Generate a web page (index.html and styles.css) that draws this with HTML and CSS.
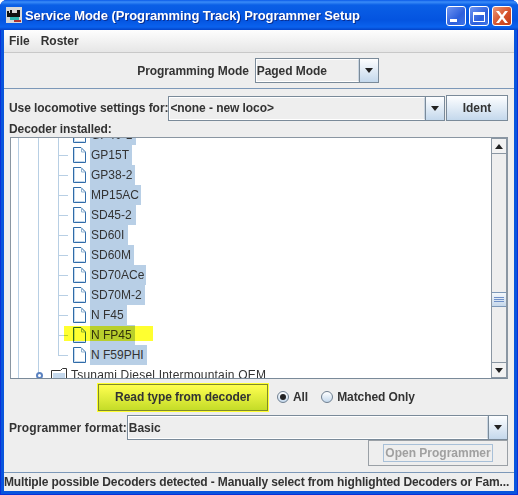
FILE: index.html
```html
<!DOCTYPE html>
<html lang="en">
<head>
    <meta charset="UTF-8">
    <meta name="viewport" content="width=device-width, initial-scale=1.0">
    <title>Programmer Setup</title>
    <link rel="stylesheet" href="styles.css">
</head>
<body>
    <div class="window">
        <div class="title-bar">
            <svg class="app-icon" width="16" height="16" viewBox="0 0 16 16">
                <rect width="16" height="16" fill="#d8d8d8"/>
                <path d="M1 4h2v2h1V3h2v3h5V3h3v7H1z" fill="#111"/>
                <rect x="4" y="10" width="9" height="3" fill="#2fb8b0"/>
                <rect x="8" y="13" width="7" height="2" fill="#a33"/>
            </svg>
            <span class="title-text">Service Mode (Programming Track) Programmer Setup</span>
            <div class="win-buttons">
                <div class="win-btn btn-blue">
                    <svg width="20" height="20" viewBox="0 0 20 20"><rect x="4" y="13" width="7" height="3" fill="#fff"/></svg>
                </div>
                <div class="win-btn btn-blue">
                    <svg width="20" height="20" viewBox="0 0 20 20"><path d="M4 6h12v10H4zM5 9v6h10V9z" fill="#fff" fill-rule="evenodd"/></svg>
                </div>
                <div class="win-btn btn-red">
                    <svg width="20" height="20" viewBox="0 0 20 20"><path d="M4 5h3l3 4 3-4h3l-4.500 6 4.500 6h-3l-3-4-3 4H4l4.500-6z" fill="#fff"/></svg>
                </div>
            </div>
        </div>

        <div class="content">
            <div class="menu-bar">
                <span>File</span>
                <span>Roster</span>
            </div>

            <div class="mode-row">
                <span class="label">Programming Mode</span>
                <div class="combo mode-combo">
                    <div class="combo-value">Paged Mode</div>
                    <div class="combo-arrow"><i class="arrow-down"></i></div>
                </div>
            </div>

            <div class="main">
                <div class="loco-row">
                    <span class="label">Use locomotive settings for:</span>
                    <div class="combo grow">
                        <div class="combo-value">&lt;none - new loco&gt;</div>
                        <div class="combo-arrow"><i class="arrow-down"></i></div>
                    </div>
                    <div class="ident-btn">Ident</div>
                </div>

                <div class="label decoder-label">Decoder installed:</div>

                <div class="tree-box">
                    <div class="tree-view">
                        <i class="guide guide-1"></i>
                        <i class="guide guide-2"></i>
                        <i class="guide guide-3"></i>
                        <div class="tree-rows" id="tree-rows"></div>
                    </div>
                    <div class="scrollbar">
                        <div class="scroll-btn"><i class="arrow-up"></i></div>
                        <div class="scroll-track">
                            <div class="scroll-thumb"><i></i><i></i><i></i></div>
                        </div>
                        <div class="scroll-btn"><i class="arrow-down"></i></div>
                    </div>
                </div>

                <div class="read-row">
                    <div class="read-btn">Read type from decoder</div>
                    <label class="radio"><i class="radio-dot checked"></i>All</label>
                    <label class="radio"><i class="radio-dot"></i>Matched Only</label>
                </div>

                <div class="format-row">
                    <span class="label format-label">Programmer format:</span>
                    <div class="combo grow">
                        <div class="combo-value">Basic</div>
                        <div class="combo-arrow"><i class="arrow-down"></i></div>
                    </div>
                </div>

                <div class="open-row">
                    <div class="open-btn"><span>Open Programmer</span></div>
                </div>
            </div>

            <div class="status-bar">Multiple possible Decoders detected - Manually select from highlighted Decoders or Fam...</div>
        </div>
    </div>

    <script>
        const decoders = [
            { name: "GP40-1", width: 46 },
            { name: "GP15T", width: 42 },
            { name: "GP38-2", width: 45 },
            { name: "MP15AC", width: 51 },
            { name: "SD45-2", width: 46 },
            { name: "SD60I", width: 38 },
            { name: "SD60M", width: 44 },
            { name: "SD70ACe", width: 56 },
            { name: "SD70M-2", width: 55 },
            { name: "N F45", width: 37 },
            { name: "N FP45", width: 45, marked: true },
            { name: "N F59PHI", width: 57 }
        ];

        const fileIcon = '<svg class="file-icon" width="13" height="16" viewBox="0 0 13 16">' +
            '<path d="M.5.5h7.500l4.500 4.500v10.500H.5z" fill="#fff" stroke="#2f6ba8"/>' +
            '<path d="M1.500 1.500v13h10" fill="none" stroke="#c4d8ec"/>' +
            '<path d="M8.500 1v4h4" fill="none" stroke="#8fb2d2"/></svg>';

        const rows = document.getElementById("tree-rows");
        decoders.forEach(d => {
            const row = document.createElement("div");
            row.classList.add("tree-row");
            if (d.marked) {
                row.classList.add("marked");
            }
            const name = document.createElement("span");
            name.classList.add("row-name");
            name.textContent = d.name;
            name.style.width = d.width + "px";
            row.innerHTML = '<i class="stub"></i>' + fileIcon;
            row.appendChild(name);
            rows.appendChild(row);
        });

        const family = document.createElement("div");
        family.classList.add("tree-row", "family-row");
        family.innerHTML = '<i class="handle"></i>' +
            '<svg class="folder-icon" width="16" height="14" viewBox="0 0 16 14">' +
            '<path d="M.5 13.500v-11h9l2-2h4v13z" fill="#fff" stroke="#333"/>' +
            '<rect x="2" y="5" width="12" height="8" fill="#c4d8ec"/></svg>' +
            '<span class="family-name">Tsunami Diesel Intermountain OEM</span>';
        rows.appendChild(family);
    </script>
</body>
</html>
```

FILE: styles.css
```css
* {
    box-sizing: border-box;
}
html, body {
    margin: 0;
    padding: 0;
}
body {
    width: 518px;
    height: 495px;
    overflow: hidden;
    font-family: "Liberation Sans", Arial, sans-serif;
    font-size: 12px;
    color: #333;
}
i {
    display: block;
}
.window {
    width: 518px;
    height: 495px;
    display: flex;
    flex-direction: column;
    background: #0855dd;
    border-radius: 7px 7px 0 0;
    padding: 0 4px 4px;
    box-shadow: inset 1px 0 #0831d9, inset -1px 0 #0831d9, inset 0 -1px #0831d9;
}
.title-bar {
    height: 30px;
    margin: 0 -4px;
    padding: 0 6px;
    display: flex;
    align-items: center;
    background: linear-gradient(to bottom, #0a5ae8 0, #3a8cf8 2px, #0a5fe6 5px, #0454e0 20px, #0a62ee 27px, #0343c8 30px);
    border-radius: 7px 7px 0 0;
}
.app-icon {
    flex: none;
}
.title-text {
    margin-left: 3px;
    font-weight: bold;
    font-size: 13px;
    letter-spacing: -0.08px;
    color: #fff;
    text-shadow: 1px 1px 0 #0a2f90;
    white-space: nowrap;
}
.win-buttons {
    margin-left: auto;
    margin-top: 2px;
    display: flex;
    gap: 3px;
}
.win-btn {
    width: 20px;
    height: 20px;
    border: 1px solid #fff;
    border-radius: 3px;
}
.win-btn svg {
    display: block;
    margin: -1px;
}
.btn-blue {
    background: linear-gradient(135deg, #6f95f2, #2c5fdc 60%, #3f74e8);
}
.btn-red {
    background: linear-gradient(135deg, #ee9878, #d5522c 55%, #c23c16);
}
.content {
    flex: 1;
    display: flex;
    flex-direction: column;
    background: #eeeeee;
    min-height: 0;
}
.menu-bar {
    height: 23px;
    display: flex;
    align-items: center;
    gap: 11px;
    padding: 0 5px;
    background: linear-gradient(to bottom, #fefefe, #e6e6e6);
    border-bottom: 1px solid #c8c8c8;
    font-weight: bold;
    flex: none;
}
.label {
    font-weight: bold;
    white-space: nowrap;
    letter-spacing: -0.07px;
}
.format-label {
    letter-spacing: 0.1px;
}
.mode-row {
    height: 36px;
    flex: none;
    display: flex;
    align-items: center;
    justify-content: center;
    gap: 6px;
    padding-right: 2px;
    border-bottom: 1px solid #7c98b8;
}
.combo {
    display: flex;
    height: 25px;
    border: 1px solid #7a8a99;
    background: #eeeeee;
    font-weight: bold;
}
.mode-combo {
    width: 124px;
}
.grow {
    flex: 1;
}
.combo-value {
    flex: 1;
    display: flex;
    align-items: center;
    border: 1px solid #fff;
    border-right-color: #c8d4e0;
    white-space: nowrap;
    letter-spacing: -0.07px;
}
.combo-arrow {
    width: 19px;
    display: flex;
    align-items: center;
    justify-content: center;
    border-left: 1px solid #7a8a99;
    background: linear-gradient(to bottom, #fdfeff, #c4d8ec);
}
.arrow-down {
    width: 0;
    height: 0;
    border: 4px solid transparent;
    border-top: 5px solid #222;
    border-bottom: 0;
}
.arrow-up {
    width: 0;
    height: 0;
    border: 4px solid transparent;
    border-bottom: 5px solid #222;
    border-top: 0;
}
.main {
    flex: 1;
    display: flex;
    flex-direction: column;
    padding: 6px 6px 0 5px;
    min-height: 0;
}
.loco-row {
    display: flex;
    align-items: center;
    height: 26px;
    flex: none;
}
.ident-btn {
    width: 62px;
    height: 26px;
    margin-left: 1px;
    display: flex;
    align-items: center;
    justify-content: center;
    font-weight: bold;
    border: 1px solid #7a8a99;
    background: linear-gradient(to bottom, #fdfeff, #c4d8ec);
}
.decoder-label {
    height: 16px;
    line-height: 16px;
    flex: none;
}
.tree-box {
    height: 242px;
    flex: none;
    display: flex;
    margin-left: 1px;
    border: 1px solid #8a96a2;
    border-bottom-color: #7a8a99;
    background: #fff;
}
.tree-view {
    flex: 1;
    position: relative;
    overflow: hidden;
}
.guide {
    position: absolute;
    top: 0;
    bottom: 0;
    width: 1px;
    background: #b8cfe4;
}
.guide-1 {
    left: 7px;
}
.guide-2 {
    left: 27px;
}
.guide-3 {
    left: 47px;
    bottom: 23px;
}
.tree-rows {
    margin-top: -13px;
    position: relative;
}
.tree-row {
    height: 20px;
    display: flex;
    align-items: center;
    position: relative;
    white-space: nowrap;
}
.stub {
    width: 10px;
    height: 1px;
    margin-left: 47px;
    background: #b8cfe4;
}
.file-icon {
    margin-left: 5px;
    flex: none;
}
.row-name {
    height: 20px;
    line-height: 20px;
    margin-left: 4px;
    padding-left: 1px;
    background: #b8cfe6;
}
.marked::after {
    content: "";
    position: absolute;
    left: 53px;
    top: 1px;
    width: 89px;
    height: 15px;
    background: #ffff30;
    mix-blend-mode: multiply;
}
.family-row {
    padding-left: 25px;
}
.handle {
    width: 7px;
    height: 7px;
    border: 2px solid #5b82c0;
    border-radius: 50%;
    background: #fff;
    flex: none;
}
.folder-icon {
    margin-left: 8px;
    flex: none;
}
.family-name {
    margin-left: 4px;
    letter-spacing: 0.2px;
}
.scrollbar {
    width: 16px;
    flex: none;
    display: flex;
    flex-direction: column;
    border-left: 1px solid #8a96a2;
    background: #eeeeee;
}
.scroll-btn {
    height: 16px;
    flex: none;
    display: flex;
    align-items: center;
    justify-content: center;
    background: #f2f2f2;
    border: 1px solid #8a96a2;
    border-left: 0;
}
.scroll-track {
    flex: 1;
    display: flex;
    flex-direction: column;
    justify-content: flex-end;
    padding-bottom: 55px;
    border-right: 1px solid #8a96a2;
}
.scroll-thumb {
    height: 15px;
    display: flex;
    flex-direction: column;
    justify-content: center;
    gap: 1px;
    padding: 0 2px;
    background: linear-gradient(to bottom, #f4f8fc, #c6d8ea);
    border-top: 1px solid #7c98b8;
    border-bottom: 1px solid #7c98b8;
}
.scroll-thumb i {
    height: 1px;
    background: #6f90c8;
}
.read-row {
    height: 36px;
    flex: none;
    display: flex;
    align-items: center;
    padding-left: 89px;
    font-weight: bold;
    letter-spacing: -0.07px;
}
.read-btn {
    width: 170px;
    height: 27px;
    display: flex;
    align-items: center;
    justify-content: center;
    border: 1px solid #7f8a2a;
    outline: 1px solid #ffff30;
    background: linear-gradient(to bottom, #ffff50, #c4dc28);
    margin-right: 9px;
}
.radio {
    display: flex;
    align-items: center;
    gap: 4px;
    margin-right: 13px;
}
.radio-dot {
    width: 12px;
    height: 12px;
    border: 1px solid #6f7f90;
    border-radius: 50%;
    background: linear-gradient(to bottom, #fff, #c4d8ec);
    display: flex;
    align-items: center;
    justify-content: center;
}
.checked::after {
    content: "";
    width: 6px;
    height: 6px;
    border-radius: 50%;
    background: #222;
}
.format-row {
    height: 25px;
    flex: none;
    display: flex;
    align-items: center;
}
.open-row {
    height: 26px;
    flex: none;
    display: flex;
    justify-content: flex-end;
}
.open-btn {
    width: 140px;
    height: 26px;
    display: flex;
    align-items: center;
    justify-content: center;
    border: 1px solid #9aa0a6;
    font-weight: bold;
    color: #a0a0a0;
}
.open-btn span {
    height: 18px;
    line-height: 16px;
    padding: 0 1px;
    border: 1px solid #a8c0d8;
}
.status-bar {
    height: 19px;
    flex: none;
    line-height: 19px;
    margin-top: auto;
    border-top: 1px solid #7c98b8;
    font-weight: bold;
    white-space: nowrap;
    overflow: hidden;
    letter-spacing: -0.13px;
}
```
